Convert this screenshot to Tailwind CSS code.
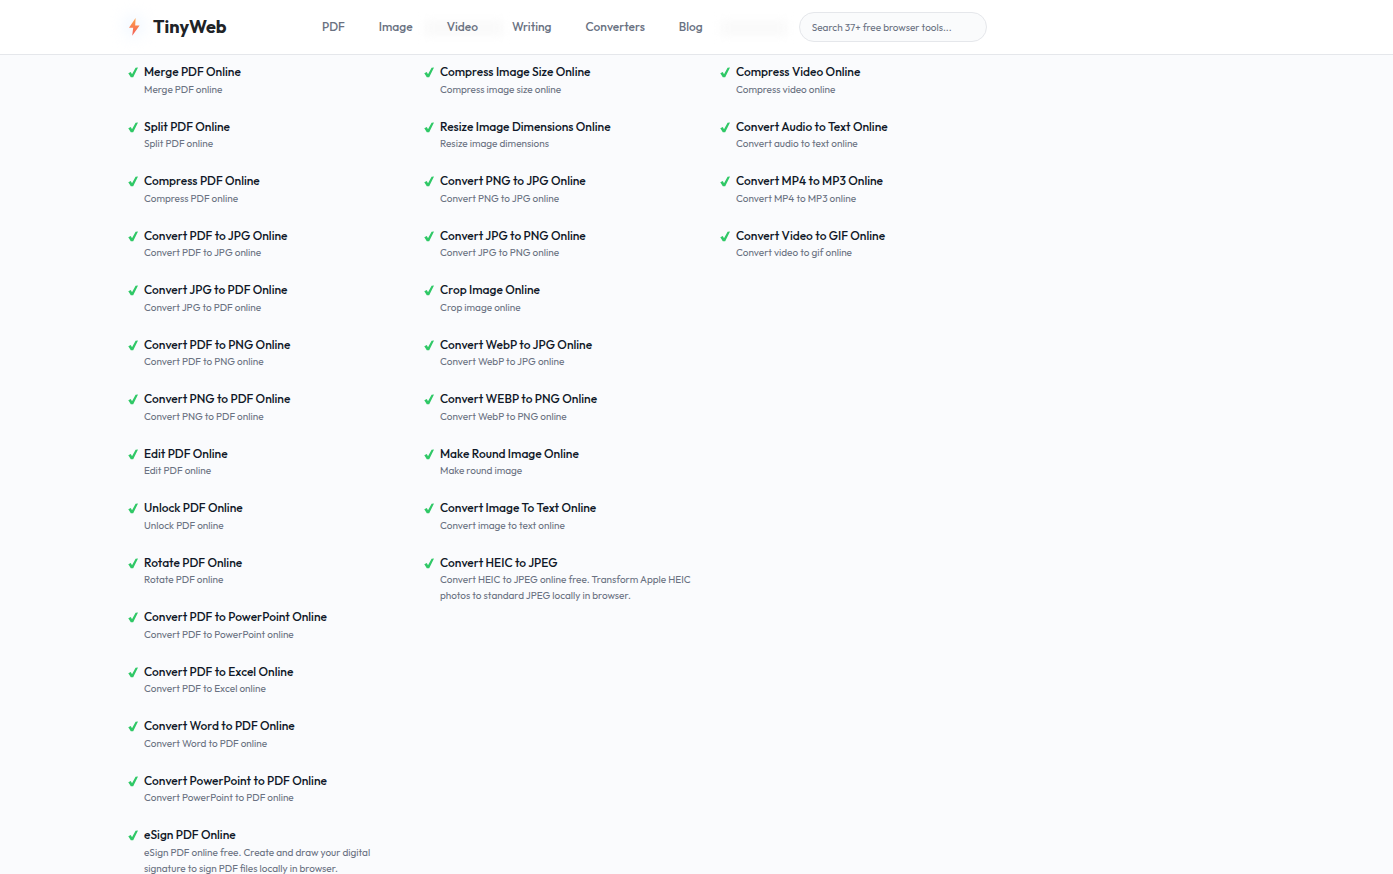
<!DOCTYPE html>
<html lang="en">
<head>
    <meta charset="UTF-8">
    <meta name="viewport" content="width=device-width, initial-scale=1.0">
    <title>TinyWeb</title>
    <script src="https://cdn.jsdelivr.net/npm/@tailwindcss/browser@4"></script>
</head>
<body class="h-screen overflow-hidden bg-[#fafbfd] font-[Outfit,Lato,sans-serif] text-gray-900">

    <svg class="hidden">
        <symbol id="check" viewBox="0 0 10 11">
            <path d="M0.3 6.3 L2.8 5 L4 7.3 L7.6 0.8 L10 0.6 L5.2 10.2 L2.8 10.2 Z" fill="#2fc866"/>
        </symbol>
    </svg>

    <!-- Header -->
    <header class="relative border-b border-gray-200 bg-white">
        <div class="absolute top-4 left-31 size-5 rounded-full bg-blue-50 blur-sm"></div>
        <div class="absolute top-5 left-106 h-4 w-20 rounded bg-neutral-50 blur-xs"></div>
        <div class="absolute top-5 left-180 h-4 w-17 rounded bg-neutral-50 blur-xs"></div>
        <div class="relative flex h-[54px] max-w-7xl items-center pl-32">
            <a href="#" class="flex w-[194px] items-center gap-3 text-lg font-bold text-[#202327]">
                <svg class="h-[18px] w-[13px]" viewBox="0 0 13 18">
                    <defs>
                        <linearGradient id="bolt" x1="0" y1="0" x2="0" y2="1">
                            <stop offset="0" stop-color="#ffa54a"/>
                            <stop offset="1" stop-color="#f25a58"/>
                        </linearGradient>
                    </defs>
                    <path d="M7.6 0 L1 9.7 L5.2 9.7 L4.2 17.8 L11.6 7.5 L7.2 7.5 Z" fill="url(#bolt)"/>
                </svg>
                TinyWeb
            </a>
            <nav class="flex items-center gap-[34px] text-xs font-medium text-gray-500">
                <a href="#">PDF</a>
                <a href="#">Image</a>
                <a href="#">Video</a>
                <a href="#">Writing</a>
                <a href="#">Converters</a>
                <a href="#">Blog</a>
            </nav>
            <input type="text" aria-label="Search tools" placeholder="Search 37+ free browser tools..." class="ml-24 h-[30px] w-47 rounded-full border border-gray-200 bg-[#fafbfc] px-3 text-[10px] placeholder:text-gray-500">
        </div>
    </header>

    <!-- Tools -->
    <main class="grid max-w-[1288px] grid-cols-4 items-start gap-6 pt-[9px] pl-32">
        <ul class="flex flex-col gap-[21px]" id="pdf"></ul>
        <ul class="flex flex-col gap-[21px]" id="image"></ul>
        <ul class="flex flex-col gap-[21px]" id="video"></ul>
    </main>

    <script>
        const tools = {
            pdf: [
                ['Merge PDF Online', 'Merge PDF online'],
                ['Split PDF Online', 'Split PDF online'],
                ['Compress PDF Online', 'Compress PDF online'],
                ['Convert PDF to JPG Online', 'Convert PDF to JPG online'],
                ['Convert JPG to PDF Online', 'Convert JPG to PDF online'],
                ['Convert PDF to PNG Online', 'Convert PDF to PNG online'],
                ['Convert PNG to PDF Online', 'Convert PNG to PDF online'],
                ['Edit PDF Online', 'Edit PDF online'],
                ['Unlock PDF Online', 'Unlock PDF online'],
                ['Rotate PDF Online', 'Rotate PDF online'],
                ['Convert PDF to PowerPoint Online', 'Convert PDF to PowerPoint online'],
                ['Convert PDF to Excel Online', 'Convert PDF to Excel online'],
                ['Convert Word to PDF Online', 'Convert Word to PDF online'],
                ['Convert PowerPoint to PDF Online', 'Convert PowerPoint to PDF online'],
                ['eSign PDF Online', 'eSign PDF online free. Create and draw your digital signature to sign PDF files locally in browser.'],
            ],
            image: [
                ['Compress Image Size Online', 'Compress image size online'],
                ['Resize Image Dimensions Online', 'Resize image dimensions'],
                ['Convert PNG to JPG Online', 'Convert PNG to JPG online'],
                ['Convert JPG to PNG Online', 'Convert JPG to PNG online'],
                ['Crop Image Online', 'Crop image online'],
                ['Convert WebP to JPG Online', 'Convert WebP to JPG online'],
                ['Convert WEBP to PNG Online', 'Convert WebP to PNG online'],
                ['Make Round Image Online', 'Make round image'],
                ['Convert Image To Text Online', 'Convert image to text online'],
                ['Convert HEIC to JPEG', 'Convert HEIC to JPEG online free. Transform Apple HEIC photos to standard JPEG locally in browser.'],
            ],
            video: [
                ['Compress Video Online', 'Compress video online'],
                ['Convert Audio to Text Online', 'Convert audio to text online'],
                ['Convert MP4 to MP3 Online', 'Convert MP4 to MP3 online'],
                ['Convert Video to GIF Online', 'Convert video to gif online'],
            ],
        };

        for (const id in tools) {
            document.getElementById(id).innerHTML = tools[id].map(([name, text]) => `
                <li>
                    <a href="#" class="flex items-start gap-1.5">
                        <svg class="mt-[3px] h-[11px] w-2.5 shrink-0"><use href="#check"/></svg>
                        <span class="flex flex-col gap-px">
                            <span class="text-xs leading-snug font-medium">${name}</span>
                            <span class="text-[10px] leading-4 text-gray-500">${text}</span>
                        </span>
                    </a>
                </li>`).join('');
        }
    </script>

</body>
</html>
